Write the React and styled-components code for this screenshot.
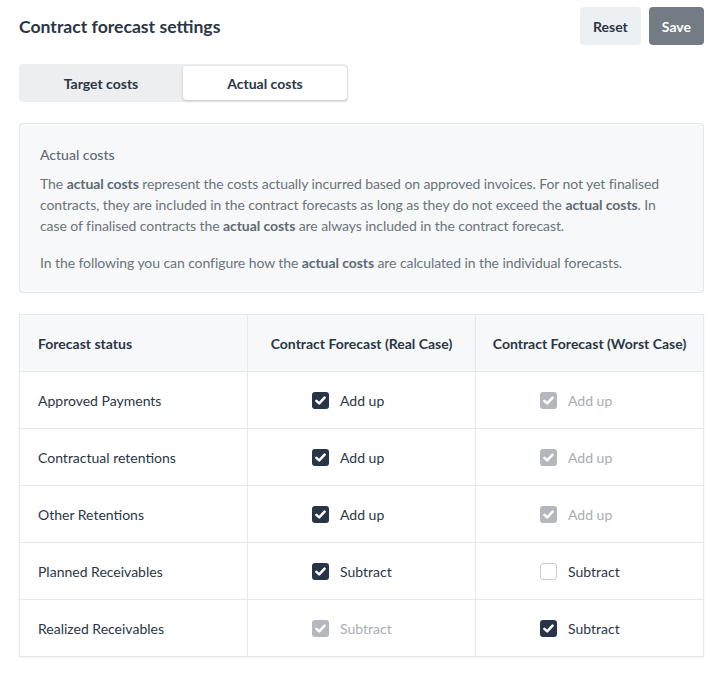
import React from "react";
import styled, { createGlobalStyle } from "styled-components";

const Global = createGlobalStyle`
  body {
    margin: 0;
    font-family: Lato, "Noto Sans", sans-serif;
    background: #fff;
    color: #2b3645;
  }
`;

const Page = styled.div`
  padding: 7px 21px 24px 19px;
`;

const Header = styled.div`
  display: flex;
  align-items: center;
  justify-content: space-between;
`;

const Title = styled.h1`
  margin: 0;
  font-size: 17.6px;
  font-weight: 700;
  color: #2b3645;
`;

const Actions = styled.div`
  display: flex;
  gap: 8px;
`;

const Button = styled.button`
  height: 38px;
  padding: 0 13px;
  border: none;
  border-radius: 4px;
  font-family: inherit;
  font-size: 14px;
  font-weight: 700;
  background: ${(p) => (p.$primary ? "#737b85" : "#edf0f2")};
  color: ${(p) => (p.$primary ? "#fff" : "#2b3645")};
`;

const Tabs = styled.div`
  display: inline-flex;
  margin-top: 19px;
  padding: 2px 1px 2px 0;
  background: #eceef0;
  border-radius: 4px;
`;

const Tab = styled.div`
  width: 164px;
  height: 34px;
  display: flex;
  align-items: center;
  justify-content: center;
  font-size: 14px;
  font-weight: 700;
  border-radius: 4px;
  color: #2b3645;
  background: ${(p) => (p.$active ? "#fff" : "transparent")};
  box-shadow: ${(p) => (p.$active ? "0 1px 3px rgba(0,0,0,0.18)" : "none")};
`;

const InfoBox = styled.div`
  margin-top: 21px;
  background: #f7f8f9;
  border: 1px solid #e5e8ea;
  border-radius: 3px;
  padding: 20px 20px 19px 20px;
  color: #6b7479;
`;

const InfoTitle = styled.div`
  font-size: 14px;
  line-height: 21px;
  font-weight: 500;
  color: #5f6a72;
  margin-bottom: 8px;
`;

const Para = styled.p`
  margin: 0 0 ${(p) => (p.$last ? "0" : "16px")};
  font-size: 14px;
  line-height: 21px;
  letter-spacing: -0.08px;
  b {
    font-weight: 700;
    color: #5f6a72;
  }
`;

const Table = styled.table`
  margin-top: 21px;
  width: 100%;
  border-collapse: collapse;
  border: 1px solid #e6e9eb;
  box-shadow: 0 1px 2px rgba(0, 0, 0, 0.06);
  table-layout: fixed;
`;

const Th = styled.th`
  height: 56px;
  background: #f7f8f9;
  border: 1px solid #e6e9eb;
  font-size: 14px;
  font-weight: 700;
  color: #2b3645;
  text-align: ${(p) => (p.$left ? "left" : "center")};
  padding: 0 ${(p) => (p.$left ? "18px" : "0")};
`;

const Td = styled.td`
  height: 56px;
  border: 1px solid #e6e9eb;
  font-size: 14px;
  color: #2b3645;
  text-align: left;
  padding: 0 0 0 ${(p) => (p.$left ? "18px" : "64px")};
`;

const Check = styled.label`
  display: flex;
  align-items: center;
  gap: 11px;
  color: ${(p) => (p.$disabled ? "#a9adb2" : "#2b3645")};
`;

const Box = styled.span`
  width: 17px;
  height: 17px;
  flex: none;
  box-sizing: border-box;
  border-radius: 3px;
  display: inline-flex;
  align-items: center;
  justify-content: center;
  background: ${(p) => (!p.$checked ? "#fff" : p.$disabled ? "#b4b7bb" : "#283547")};
  border: ${(p) => (p.$checked ? "none" : "1px solid #c9cdd2")};
`;

const Tick = () => (
  <svg width="11" height="9" viewBox="0 0 11 9">
    <path d="M1.4 4.8 L4.2 7.4 L9.6 1.6" fill="none" stroke="#fff" strokeWidth="2.5" strokeLinecap="round" strokeLinejoin="round" />
  </svg>
);

const Option = ({ label, checked, disabled }) => (
  <Check $disabled={disabled}>
    <Box $checked={checked} $disabled={disabled}>
      {checked && <Tick />}
    </Box>
    {label}
  </Check>
);

const rows = [
  ["Approved Payments", ["Add up", true, false], ["Add up", true, true]],
  ["Contractual retentions", ["Add up", true, false], ["Add up", true, true]],
  ["Other Retentions", ["Add up", true, false], ["Add up", true, true]],
  ["Planned Receivables", ["Subtract", true, false], ["Subtract", false, false]],
  ["Realized Receivables", ["Subtract", true, true], ["Subtract", true, false]],
];

export default function App() {
  return (
    <Page>
      <Global />
      <Header>
        <Title>Contract forecast settings</Title>
        <Actions>
          <Button>Reset</Button>
          <Button $primary>Save</Button>
        </Actions>
      </Header>
      <Tabs>
        <Tab>Target costs</Tab>
        <Tab $active>Actual costs</Tab>
      </Tabs>
      <InfoBox>
        <InfoTitle>Actual costs</InfoTitle>
        <Para>
          The <b>actual costs</b> represent the costs actually incurred based on approved invoices. For not yet
          finalised contracts, they are included in the contract forecasts as long as they do not exceed the{" "}
          <b>actual costs</b>. In case of finalised contracts the <b>actual costs</b> are always included in the
          contract forecast.
        </Para>
        <Para $last>
          In the following you can configure how the <b>actual costs</b> are calculated in the individual forecasts.
        </Para>
      </InfoBox>
      <Table>
        <thead>
          <tr>
            <Th $left>Forecast status</Th>
            <Th>Contract Forecast (Real Case)</Th>
            <Th>Contract Forecast (Worst Case)</Th>
          </tr>
        </thead>
        <tbody>
          {rows.map(([name, real, worst]) => (
            <tr key={name}>
              <Td $left>{name}</Td>
              <Td>
                <Option label={real[0]} checked={real[1]} disabled={real[2]} />
              </Td>
              <Td>
                <Option label={worst[0]} checked={worst[1]} disabled={worst[2]} />
              </Td>
            </tr>
          ))}
        </tbody>
      </Table>
    </Page>
  );
}
